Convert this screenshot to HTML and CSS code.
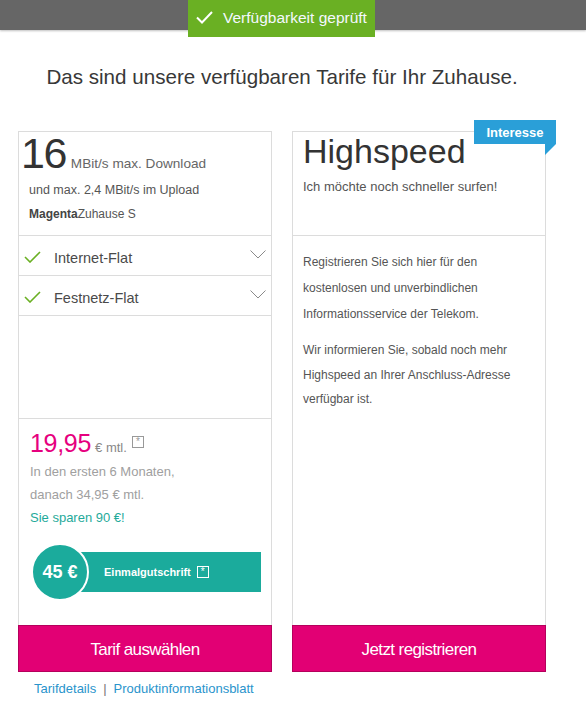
FILE: index.html
```html
<!DOCTYPE html>
<html lang="de">
<head>
<meta charset="utf-8">
<title>Tarife</title>
<link rel="stylesheet" href="styles.css">
</head>
<body>
<header class="topbar">
  <div class="badge">
    <svg class="badge-icon" width="17" height="13" viewBox="0 0 17 13"><polyline points="1,6.5 6,11.5 16,1" fill="none" stroke="#fff" stroke-width="2"/></svg>
    <span>Verfügbarkeit geprüft</span>
  </div>
</header>
<div class="page">
  <h1 class="headline">Das sind unsere verfügbaren Tarife für Ihr Zuhause.</h1>

  <div class="cards">
    <div class="col">
      <div class="card">
        <div class="card-head">
          <div class="speed"><span class="speed-num">16</span><span class="speed-unit">MBit/s max. Download</span></div>
          <div class="upload">und max. 2,4 MBit/s im Upload</div>
          <div class="product"><b>Magenta</b>Zuhause S</div>
        </div>
        <div class="feature">
          <svg class="check" width="17" height="12" viewBox="0 0 17 12"><polyline points="1,6 6,11 16,1" fill="none" stroke="#6ab023" stroke-width="1.6"/></svg>
          <span class="feature-name">Internet-Flat</span>
          <svg class="chev" width="16" height="9" viewBox="0 0 16 9"><polyline points="0.5,0.5 8,8 15.5,0.5" fill="none" stroke="#8a8a8a" stroke-width="1"/></svg>
        </div>
        <div class="feature">
          <svg class="check" width="17" height="12" viewBox="0 0 17 12"><polyline points="1,6 6,11 16,1" fill="none" stroke="#6ab023" stroke-width="1.6"/></svg>
          <span class="feature-name">Festnetz-Flat</span>
          <svg class="chev" width="16" height="9" viewBox="0 0 16 9"><polyline points="0.5,0.5 8,8 15.5,0.5" fill="none" stroke="#8a8a8a" stroke-width="1"/></svg>
        </div>
        <div class="spacer"></div>
        <div class="price">
          <div class="price-main"><span class="price-num">19,95</span><span class="price-unit">€ mtl.</span><span class="star star-grey">*</span></div>
          <div class="price-info">In den ersten 6 Monaten,</div>
          <div class="price-info">danach 34,95 € mtl.</div>
          <div class="price-save">Sie sparen 90 €!</div>
          <div class="bonus">
            <div class="bonus-circle">45 €</div>
            <div class="bonus-bar">Einmalgutschrift<span class="star star-white">*</span></div>
          </div>
        </div>
      </div>
      <div class="cta">Tarif auswählen</div>
      <div class="links"><span class="link">Tarifdetails</span><span class="sep">|</span><span class="link">Produktinformationsblatt</span></div>
    </div>

    <div class="col">
      <div class="card">
        <div class="tag">Interesse</div>
        <div class="card-head">
          <div class="hs-title">Highspeed</div>
          <div class="hs-sub">Ich möchte noch schneller surfen!</div>
        </div>
        <div class="hs-body">
          <p>Registrieren Sie sich hier für den kostenlosen und unverbindlichen Informationsservice der Telekom.</p>
          <p class="p2">Wir informieren Sie, sobald noch mehr Highspeed an Ihrer Anschluss-Adresse verfügbar ist.</p>
        </div>
      </div>
      <div class="cta">Jetzt registrieren</div>
    </div>
  </div>
</div>
</body>
</html>
```

FILE: styles.css
```css
* { box-sizing: border-box; }
html, body { margin: 0; padding: 0; background: #fff; }
body {
  font-family: "Liberation Sans", Arial, sans-serif;
  color: #333;
}
.page { width: 564px; }

.topbar {
  height: 30px;
  background: #666;
  display: flex;
  justify-content: center;
  align-items: flex-start;
  padding-right: 22px;
  box-shadow: 0 1px 2px rgba(0,0,0,0.25);
  position: relative;
  z-index: 1;
}
.badge {
  height: 37px;
  width: 187px;
  background: #6ab023;
  color: #f4f8ff;
  display: flex;
  align-items: center;
  padding: 0 0 0 8px;
  gap: 10px;
  font-size: 15.5px;
  position: relative;
  z-index: 2;
  margin-left: -1px;
}
.badge span { position: relative; top: -1px; }
.badge-icon { flex: none; position: relative; top: -1px; }

.headline {
  margin: 35px 0 0;
  font-weight: normal;
  font-size: 20.6px;
  line-height: 24px;
  text-align: center;
  color: #383838;
}

.cards {
  display: flex;
  gap: 20px;
  padding: 0 0 0 18px;
  margin-top: 42px;
}
.col { width: 254px; display: flex; flex-direction: column; }
.card {
  position: relative;
  height: 494px;
  border: 1px solid #dcdcdc;
  border-bottom: none;
  display: flex;
  flex-direction: column;
}
.card-head {
  height: 104px;
  border-bottom: 1px solid #dcdcdc;
  flex: none;
}

/* left card */
.speed { display: flex; align-items: baseline; padding-left: 2px; }
.speed-num { font-size: 43px; line-height: 42px; letter-spacing: -1.5px; color: #333; }
.speed-unit { font-size: 13.6px; color: #666; margin-left: 5px; }
.upload { margin-top: 9px; padding-left: 10px; font-size: 12.5px; line-height: 14px; color: #555; }
.product { margin-top: 10px; padding-left: 10px; font-size: 12px; line-height: 14px; color: #555; }
.product b { color: #444; }

.feature {
  height: 40px;
  border-bottom: 1px solid #dcdcdc;
  display: flex;
  align-items: center;
  padding: 0 5px 0 5px;
  flex: none;
}
.check { flex: none; margin-top: 2px; }
.feature-name { font-size: 14.5px; color: #4a4a4a; margin-left: 13px; flex: 1; position: relative; top: 2px; }
.chev { flex: none; align-self: flex-start; margin-top: 14px; }

.spacer { flex: 1; border-bottom: 1px solid #dcdcdc; }

.price { height: 206px; flex: none; padding: 10px 10px 0 11px; }
.price-main { display: flex; align-items: baseline; height: 28px; }
.price-num { font-size: 25px; line-height: 28px; color: #e6007e; letter-spacing: -0.3px; }
.price-unit { font-size: 13px; color: #888; margin-left: 4px; }
.star {
  display: inline-flex;
  justify-content: center;
  align-items: center;
  width: 12px;
  height: 12px;
  font-size: 10px;
  line-height: 1;
  margin-left: 5px;
  align-self: center;
}
.star-grey { border: 1px solid #999; color: #999; margin-top: -2px; }
.star-white { border: 1px solid #fff; color: #fff; }
.price-info { font-size: 13px; line-height: 23px; color: #a0a0a0; }
.price-main + .price-info { margin-top: 3px; }
.price-save { font-size: 13px; line-height: 23px; color: #1faa9a; }

.bonus {
  display: flex;
  align-items: center;
  margin-top: 14px;
  margin-left: 1px;
}
.bonus-circle {
  flex: none;
  width: 58px;
  height: 58px;
  border-radius: 50%;
  background: #1bab9c;
  border: 2px solid #fff;
  color: #fff;
  font-size: 18px;
  font-weight: bold;
  display: flex;
  align-items: center;
  justify-content: center;
  position: relative;
  z-index: 1;
}
.bonus-bar {
  flex: 1;
  height: 40px;
  margin-left: -9px;
  background: #1bab9c;
  color: #fff;
  font-size: 11px;
  font-weight: bold;
  display: flex;
  align-items: center;
  padding-left: 24px;
}
.bonus-bar .star { margin-left: 6px; font-weight: normal; }

.cta {
  height: 47px;
  background: #e20074;
  border: 1px solid #b5005c;
  color: #fff;
  font-size: 17px;
  letter-spacing: -0.6px;
  display: flex;
  align-items: center;
  justify-content: center;
  padding-top: 3px;
}

.links {
  margin-top: 9px;
  padding-left: 16px;
  font-size: 13px;
  line-height: 16px;
  color: #2a94cc;
}
.sep { color: #777; margin: 0 7px; }

/* right card */
.tag {
  position: absolute;
  top: -12px;
  right: -11px;
  width: 82px;
  height: 24px;
  background: #2a9fd8;
  color: #fff;
  font-size: 13px;
  font-weight: bold;
  display: flex;
  align-items: center;
  justify-content: center;
}
.tag::after {
  content: "";
  position: absolute;
  top: 100%;
  right: 0;
  width: 0;
  height: 0;
  border-top: 11px solid #2a9fd8;
  border-right: 11px solid transparent;
}
.hs-title { font-size: 34px; line-height: 38px; padding-left: 10px; color: #333; }
.hs-sub { margin-top: 9px; padding-left: 10px; font-size: 13px; line-height: 16px; color: #555; }
.hs-body { padding: 13px 10px 0 10px; }
.hs-body p { margin: 0 0 10px; font-size: 12px; line-height: 26px; color: #555; }
.hs-body .p2 { line-height: 24.5px; margin-top: 11px; }
```
